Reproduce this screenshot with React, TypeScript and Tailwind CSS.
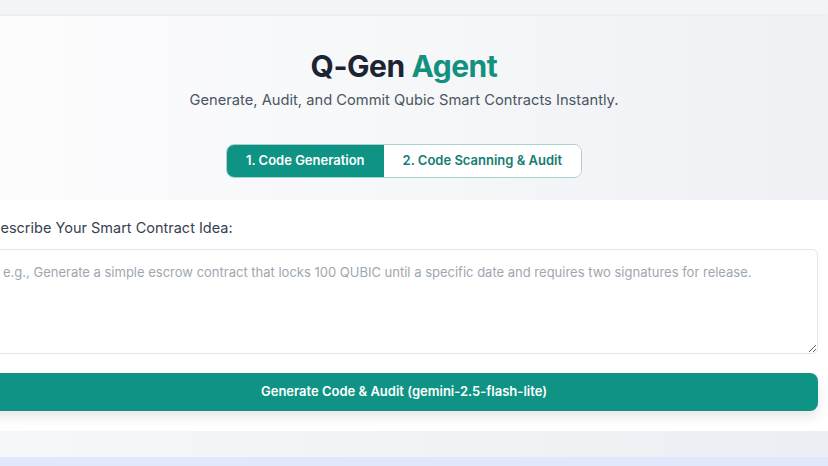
import { useState } from "react";

export default function App() {
  const [tab, setTab] = useState<"gen" | "audit">("gen");
  const [idea, setIdea] = useState("");

  return (
    <div
      className="w-[828px] h-[466px] overflow-hidden bg-[#f3f4f8] pt-4"
      style={{ fontFamily: "Inter, 'Noto Sans', sans-serif" }}
    >
      <div className="-ml-[20px] w-[848px]">
        {/* Header */}
        <div className="bg-linear-to-r from-[#fcfcfd] via-[#f6f7f9] to-[#eef0f4] shadow-[0_-1px_3px_rgba(0,0,0,0.04)] pt-8 pb-[22px] flex flex-col items-center">
          <h1 className="text-[30px] leading-9 font-bold text-[#1c2433] tracking-[-0.015em]">
            Q-Gen <span className="text-[#12917f]">Agent</span>
          </h1>
          <p className="mt-1 text-[14.7px] leading-6 text-[#4b5563]">
            Generate, Audit, and Commit Qubic Smart Contracts Instantly.
          </p>
          <div className="mt-8 flex h-[34px] rounded-lg border border-[#a9d2ce] overflow-hidden bg-white">
            <button
              onClick={() => setTab("gen")}
              className={`px-[19px] text-[13px] font-semibold ${
                tab === "gen" ? "bg-[#0f9384] text-white" : "bg-white text-[#127d72]"
              }`}
            >
              1. Code Generation
            </button>
            <button
              onClick={() => setTab("audit")}
              className={`px-[19px] text-[13px] font-semibold ${
                tab === "audit" ? "bg-[#0f9384] text-white" : "bg-white text-[#127d72]"
              }`}
            >
              2. Code Scanning &amp; Audit
            </button>
          </div>
        </div>

        {/* Generation panel */}
        <div className="bg-white px-[10px] pt-4 pb-5">
          <label className="block text-[14.5px] leading-6 text-[#374151] mb-[9px]">
            Describe Your Smart Contract Idea:
          </label>
          <textarea
            value={idea}
            onChange={(e) => setIdea(e.target.value)}
            placeholder="e.g., Generate a simple escrow contract that locks 100 QUBIC until a specific date and requires two signatures for release."
            className="block w-full h-[105px] rounded-md border border-[#e3e5e9] p-3 text-[13px] leading-5 text-[#1f2937] placeholder-[#a0a6b0] focus:outline-none"
          />
          <button className="mt-[19px] w-full h-[38px] rounded-lg bg-[#0f9384] text-white text-[13px] font-semibold shadow-[0_6px_12px_rgba(15,23,42,0.10)]">
            Generate Code &amp; Audit (gemini-2.5-flash-lite)
          </button>
        </div>

        <div className="h-[26px] bg-linear-to-r from-[#f6f7f9] to-[#eceef3]" />
        <div className="h-[20px] bg-[#dfe9fb]" />
      </div>
    </div>
  );
}
